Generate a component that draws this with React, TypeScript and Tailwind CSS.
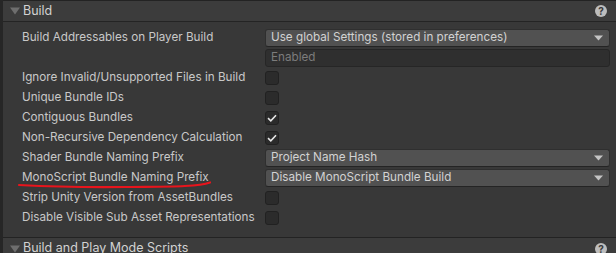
const font = "font-['Inter','Noto_Sans',sans-serif]";

function Caret() {
  return (
    <svg width="9" height="6" viewBox="0 0 9 6" className="shrink-0">
      <path d="M0 0.5 H9 L4.5 5.5 Z" fill="#c4c4c4" />
    </svg>
  );
}

function FoldTriangle() {
  return (
    <svg width="10" height="8" viewBox="0 0 10 8" className="shrink-0">
      <path d="M0 0.5 H10 L5 7.5 Z" fill="#6e6e6e" />
    </svg>
  );
}

function Help() {
  return (
    <svg width="12" height="12" viewBox="0 0 12 12">
      <circle cx="6" cy="6" r="6" fill="#bdbdbd" />
      <text x="6" y="9.6" textAnchor="middle" fontSize="10" fontWeight="700" fill="#3a3a3a" fontFamily="Inter, sans-serif">
        ?
      </text>
    </svg>
  );
}

function Dropdown({ value }: { value: string }) {
  return (
    <div className="flex h-[18px] w-full items-center justify-between rounded-[3px] border border-[#2f2f2f] border-b-[#242424] bg-[#515151] pl-[5px] pr-[6px] text-[11.7px] text-[#d2d2d2]">
      <span className="whitespace-nowrap">{value}</span>
      <Caret />
    </div>
  );
}

function Check({ on }: { on?: boolean }) {
  return (
    <div className="flex h-[14px] w-[14px] items-center justify-center rounded-[3px] border border-[#212121] bg-[#2b2b2b]">
      {on && (
        <svg width="10" height="8" viewBox="0 0 10 8">
          <path d="M1 4.2 L3.8 6.8 L9 1.2" fill="none" stroke="#e6e6e6" strokeWidth="1.6" />
        </svg>
      )}
    </div>
  );
}

function Row({ label, children }: { label?: string; children: React.ReactNode }) {
  return (
    <div className="flex h-[20px] items-center">
      <div className="w-[262px] shrink-0 whitespace-nowrap pl-[19px] text-[11.7px] text-[#c8c8c8]">{label}</div>
      <div className="flex flex-1 items-center pr-[6px]">{children}</div>
    </div>
  );
}

export default function App() {
  return (
    <div className={`relative h-[253px] w-[616px] overflow-hidden border-l-[3px] border-[#262626] bg-[#383838] ${font}`}>
      {/* Build header */}
      <div className="flex h-[22px] items-center border-y border-t-[#232323] border-b-[#242424] bg-[#3c3c3c] pl-[7px] pr-[9px]">
        <FoldTriangle />
        <span className="ml-[3px] flex-1 whitespace-nowrap text-[12.5px] text-[#d2d2d2]">Build</span>
        <Help />
      </div>

      <div className="flex flex-col pt-[6px]">
        <Row label="Build Addressables on Player Build">
          <Dropdown value="Use global Settings (stored in preferences)" />
        </Row>
        <Row>
          <div className="flex h-[18px] w-full items-center rounded-[3px] border border-[#262626] bg-[#2f2f2f] pl-[5px] text-[11.7px] text-[#7c7c7c]">
            Enabled
          </div>
        </Row>
        <Row label="Ignore Invalid/Unsupported Files in Build">
          <Check />
        </Row>
        <Row label="Unique Bundle IDs">
          <Check />
        </Row>
        <Row label="Contiguous Bundles">
          <Check on />
        </Row>
        <Row label="Non-Recursive Dependency Calculation">
          <Check on />
        </Row>
        <Row label="Shader Bundle Naming Prefix">
          <Dropdown value="Project Name Hash" />
        </Row>
        <Row label="MonoScript Bundle Naming Prefix">
          <Dropdown value="Disable MonoScript Bundle Build" />
        </Row>
        <Row label="Strip Unity Version from AssetBundles">
          <Check />
        </Row>
        <Row label="Disable Visible Sub Asset Representations">
          <Check />
        </Row>
      </div>

      {/* next section header */}
      <div className="mt-[9px] flex h-[22px] items-center border-t border-[#232323] bg-[#3c3c3c] pl-[7px] pr-[9px]">
        <FoldTriangle />
        <span className="ml-[3px] flex-1 whitespace-nowrap text-[12.5px] text-[#d2d2d2]">Build and Play Mode Scripts</span>
        <Help />
      </div>

      {/* red hand-drawn underline */}
      <svg className="pointer-events-none absolute left-[14px] top-[179px]" width="200" height="12" viewBox="0 0 200 12">
        <path
          d="M2 6 C30 7.5 70 8.5 110 8 C150 7.5 180 8 193 3.5"
          fill="none"
          stroke="#e8141c"
          strokeWidth="2.2"
          strokeLinecap="round"
        />
      </svg>
    </div>
  );
}
